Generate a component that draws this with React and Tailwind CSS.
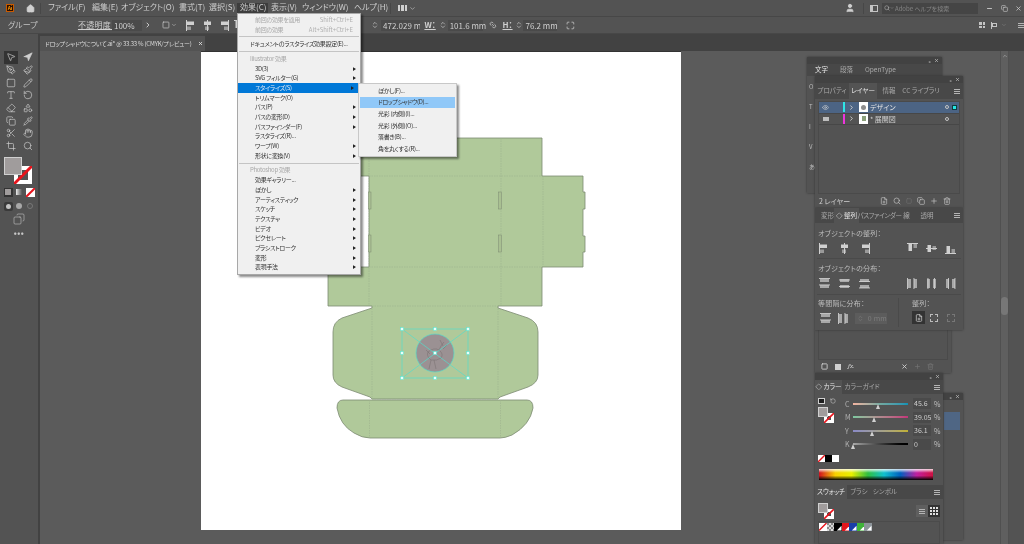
import {
  ChevronDown,
  ChevronRight,
  ChevronsUpDown,
  Copy,
  Eye,
  House,
  Link2,
  Minus,
  MousePointer2,
  Navigation,
  PenTool,
  Pencil,
  Eraser,
  Paintbrush,
  Pipette,
  RotateCcw,
  Search,
  Square,
  Trash2,
  Type,
  User,
  X,
  Plus,
  FilePlus,
  Crop,
  Shapes,
  Scissors,
  Hand,
  Maximize,
} from "lucide-react";

const menuBar = [
  ["ファイル(F)", "w-[44px]"],
  ["編集(E)", "w-[29px]"],
  ["オブジェクト(O)", "w-[58px]"],
  ["書式(T)", "w-[30px]"],
  ["選択(S)", "w-[31px]"],
  ["効果(C)", "w-[31px]"],
  ["表示(V)", "w-[31px]"],
  ["ウィンドウ(W)", "w-[52px]"],
  ["ヘルプ(H)", "w-[40px]"],
];

// 効果メニュー
const effectMenu = [
  { t: "前回の効果を適用", k: "Shift+Ctrl+E", off: true },
  { t: "前回の効果", k: "Alt+Shift+Ctrl+E", off: true },
  { sep: true },
  { t: "ドキュメントのラスタライズ効果設定(E)...", head: true },
  { sep: true },
  { t: "Illustrator 効果", head: true, off: true },
  { t: "3D(3)", sub: true },
  { t: "SVG フィルター(G)", sub: true },
  { t: "スタイライズ(S)", sub: true, on: true },
  { t: "トリムマーク(O)" },
  { t: "パス(P)", sub: true },
  { t: "パスの変形(D)", sub: true },
  { t: "パスファインダー(F)", sub: true },
  { t: "ラスタライズ(R)..." },
  { t: "ワープ(W)", sub: true },
  { t: "形状に変換(V)", sub: true },
  { sep: true },
  { t: "Photoshop 効果", head: true, off: true },
  { t: "効果ギャラリー..." },
  { t: "ぼかし", sub: true },
  { t: "アーティスティック", sub: true },
  { t: "スケッチ", sub: true },
  { t: "テクスチャ", sub: true },
  { t: "ビデオ", sub: true },
  { t: "ピクセレート", sub: true },
  { t: "ブラシストローク", sub: true },
  { t: "変形", sub: true },
  { t: "表現手法", sub: true },
];

const styleMenu = ["ぼかし(F)...", "ドロップシャドウ(D)...", "光彩 (内側)(I)...", "光彩 (外側)(O)...", "落書き(B)...", "角を丸くする(R)..."];

function Tri({ className = "" }) {
  return (
    <svg width="3" height="4" viewBox="0 0 4 5" className={className}>
      <polygon points="0,0 4,2.5 0,5" fill="currentColor" />
    </svg>
  );
}

function MenuRow({ item }) {
  if (item.sep) return <div className="h-[1px] mx-[1px] my-[2px] bg-[#c4c4c4]" />;
  const color = item.off ? "text-[#a8a8a8]" : item.on ? "text-[#dfe9f5]" : "text-[#333333]";
  return (
    <div className={`h-[9.7px] flex items-center pr-[4px] ${item.head ? "pl-[12px]" : "pl-[17px]"} ${color} ${item.on ? "bg-[#0078d7] mr-[2px]" : ""}`}>
      <span className="flex-1 whitespace-nowrap">{item.t}</span>
      {item.k && <span className="mr-[3px] text-[#b0b0b0] tracking-normal">{item.k}</span>}
      {item.sub && <Tri className="text-[#222222]" />}
    </div>
  );
}

// 整列パネルのアイコン
function AlignIcon({ v = false, mirror = 0 }) {
  const c = "#d0d0d0";
  const offs = [0, 5, 10][mirror];
  return (
    <svg width="11" height="11" viewBox="0 0 11 11" className="shrink-0">
      {v ? (
        <>
          <rect x="1.5" y={[1, 2, 3][mirror]} width="3.5" height="7" fill={c} />
          <rect x="6.5" y={[1, 3, 6][mirror]} width="3.5" height="4" fill="#9a9a9a" />
          <rect x="0" y={offs} width="11" height="1" fill={c} />
        </>
      ) : (
        <>
          <rect x={[1, 2, 3][mirror]} y="1.5" width="7" height="3.5" fill={c} />
          <rect x={[1, 3, 6][mirror]} y="6.5" width="4" height="3.5" fill="#9a9a9a" />
          <rect x={offs} y="0" width="1" height="11" fill={c} />
        </>
      )}
    </svg>
  );
}

// 分布アイコン: 線2本とバー2本
function DistIcon({ v = false, mirror = 0 }) {
  const c = "#d0d0d0";
  const line = [0, 1.5, 3][mirror];
  return (
    <svg width="11" height="11" viewBox="0 0 11 11" className="shrink-0">
      {v ? (
        <>
          <rect x="1" y="1" width="9" height="3" fill="#a8a8a8" />
          <rect x="1" y="7" width="9" height="3" fill="#a8a8a8" />
          <rect x="0" y={line} width="11" height="0.9" fill={c} />
          <rect x="0" y={line + 6.5} width="11" height="0.9" fill={c} />
        </>
      ) : (
        <>
          <rect x="1" y="1" width="3" height="9" fill="#a8a8a8" />
          <rect x="7" y="1" width="3" height="9" fill="#a8a8a8" />
          <rect x={line} y="0" width="0.9" height="11" fill={c} />
          <rect x={line + 6.5} y="0" width="0.9" height="11" fill={c} />
        </>
      )}
    </svg>
  );
}

function PanelMenu() {
  return (
    <div className="flex flex-col gap-[1px] w-[6px]">
      <div className="h-[1px] bg-[#b4b4b4]" />
      <div className="h-[1px] bg-[#b4b4b4]" />
      <div className="h-[1px] bg-[#b4b4b4]" />
    </div>
  );
}

function PanelHeader() {
  return (
    <div className="h-[7px] bg-[#424242] flex items-center justify-end gap-[3px] pr-[3px] text-[#c4c4c4] text-[5px] leading-none">
      <span>«</span>
      <X size={5} strokeWidth={3} />
    </div>
  );
}

function FillStroke({ small = false }) {
  return (
    <div className={`relative ${small ? "w-[16px] h-[16px]" : "w-[28px] h-[27px]"}`}>
      <div className={`absolute right-0 bottom-0 bg-white overflow-hidden ${small ? "w-[10px] h-[10px]" : "w-[18px] h-[18px]"}`}>
        <div className={`absolute bg-[#535353] ${small ? "inset-[3px]" : "inset-[4px]"}`} />
        <svg viewBox="0 0 10 10" className="absolute inset-0 w-full h-full">
          <line x1="0" y1="10" x2="10" y2="0" stroke="#e8141c" strokeWidth="1.6" />
        </svg>
      </div>
      <div className={`absolute left-0 top-0 bg-[#a09c9c] border border-[#d0d0d0] ${small ? "w-[10px] h-[10px]" : "w-[18px] h-[18px]"}`} />
    </div>
  );
}

function ToolBar() {
  const Tool = ({ icon: Icon, on, fill }) => (
    <div className={`relative w-[14px] h-[12.7px] flex items-center justify-center ${on ? "bg-[#333333]" : ""}`}>
      <Icon size={10} strokeWidth={1.6} className="text-[#cfcfcf]" fill={fill ? "#cfcfcf" : "none"} />
    </div>
  );
  const tools = [
    [MousePointer2, true, false],
    [Navigation, false, true],
    [PenTool],
    [Paintbrush],
    [Square],
    [Pencil],
    [Type],
    [RotateCcw],
    [Eraser],
    [Shapes],
    [Copy],
    [Pipette],
    [Scissors],
    [Hand],
    [Crop],
    [Search],
  ];
  return (
    <div className="w-[38px] shrink-0 bg-[#535353] flex flex-col items-center pt-[17px]">
      <div className="grid grid-cols-2 gap-x-[3px]">
        {tools.map(([icon, on, fill], i) => (
          <Tool key={i} icon={icon} on={on} fill={fill} />
        ))}
      </div>
      <div className="mt-[4px] -ml-[3px]">
        <FillStroke />
      </div>
      <div className="flex gap-[2px] mt-[4px]">
        <div className="w-[9px] h-[9px] bg-[#333333] p-[1.5px]"><div className="w-full h-full bg-[#a09c9c]" /></div>
        <div className="w-[9px] h-[9px] p-[1.5px]"><div className="w-full h-full bg-gradient-to-r from-[#eeeeee] to-[#555555]" /></div>
        <div className="w-[9px] h-[9px] bg-white overflow-hidden">
          <svg viewBox="0 0 9 9"><line x1="0" y1="9" x2="9" y2="0" stroke="#e8141c" strokeWidth="2" /></svg>
        </div>
      </div>
      <div className="flex gap-[2px] mt-[5px]">
        <div className="w-[9px] h-[9px] rounded-[2px] bg-[#3a3a3a] flex items-center justify-center"><div className="w-[5px] h-[5px] rounded-full bg-[#c4c4c4]" /></div>
        <div className="w-[9px] h-[9px] flex items-center justify-center"><div className="w-[6px] h-[6px] rounded-full bg-[#a8a8a8]" /></div>
        <div className="w-[9px] h-[9px] flex items-center justify-center"><div className="w-[6px] h-[6px] rounded-full border border-[#777777]" /></div>
      </div>
      <Copy size={12} className="text-[#c4c4c4] mt-[2px] -scale-x-100" strokeWidth={1.2} />
      <div className="text-[#c8c8c8] text-[8px] leading-none mt-[4px] font-bold tracking-[0.5px]">•••</div>
    </div>
  );
}

function Handle({ x, y }) {
  return <rect x={x - 1.5} y={y - 1.5} width="3" height="3" fill="#eafffb" stroke="#4fe3d2" strokeWidth="0.5" />;
}

function Dieline() {
  const fold = { stroke: "#9db28d", strokeWidth: 0.6, strokeDasharray: "1.5 1", fill: "none" };
  const cut = { fill: "#b0c99a", stroke: "#7c8a72", strokeWidth: 0.8 };
  return (
    <svg viewBox="201 52 480 478" className="w-full h-full block">
      {/* 上部 */}
      <path d="M369 138 H500 V138 H542 V176 H583 V192 H585 V209 H583 V236 H585 V252 H583 V267 H542 V306 H498 L498 308 L528 318 Q538 322 538 332 V375 Q538 383 528 387 L500 397 L498 399 H372 L370 397 L342 387 Q333 383 333 375 V332 Q333 322 342 318 L372 308 V306 H328 V267 H369 V176 H340 V138 Z" {...cut} />
      <path d="M343 400 H368 L372 400 H498 L502 400 H527 Q533 400 533 408 Q530 425 512 435 Q505 438 500 438 H370 Q362 438 354 433 Q340 425 337 408 Q337 400 343 400 Z" {...cut} />
      {/* 折り線 */}
      <path d="M369 138 V306 M501 138 V306 M369 176 H543 M369 267 H543 M372 306 V399 M498 306 V399 M372 306 H498 M369.5 400 V438 M500.5 400 V438 M372 399 H498 M543 176 V267" {...fold} />
      {/* スリット */}
      <rect x="368.5" y="192" width="2.5" height="17" fill="#a9c092" stroke="#7c8a72" strokeWidth="0.5" />
      <rect x="368.5" y="235" width="2.5" height="17" fill="#a9c092" stroke="#7c8a72" strokeWidth="0.5" />
      <rect x="498.5" y="192" width="3" height="17" fill="#a9c092" stroke="#7c8a72" strokeWidth="0.5" />
      <rect x="498.5" y="235" width="3" height="17" fill="#a9c092" stroke="#7c8a72" strokeWidth="0.5" />
      {/* ロゴと選択枠 */}
      <circle cx="435" cy="353" r="19" fill="#9b9193" stroke="#55dccb" strokeWidth="0.7" />
      <path d="M444 342 Q441 345 439 350 Q434 347 428 352 Q426 356 431 360 L429 369 M434 360 L436 369 M439 350 Q444 354 441 358 Q437 361 431 360 M447 345 L443 349 M426 350 L430 354 M440 340 L443 346" fill="none" stroke="#6d6466" strokeWidth="0.4" />
      <rect x="402" y="329" width="66" height="49" fill="none" stroke="#55dccb" strokeWidth="0.7" />
      <path d="M402 329 L468 378 M468 329 L402 378" stroke="#55dccb" strokeWidth="0.7" />
      {[[402, 329], [435, 329], [468, 329], [402, 353], [468, 353], [402, 378], [435, 378], [468, 378], [435, 353]].map(([x, y]) => (
        <Handle key={`${x}-${y}`} x={x} y={y} />
      ))}
    </svg>
  );
}

function LayerRow({ name, color, on, dot }) {
  return (
    <div className={`h-[11.5px] flex items-center border-b border-[#474747] ${on ? "bg-[#4c6484]" : ""}`}>
      <div className="w-[11px] flex justify-center ml-[1px]">
        {on ? <Eye size={7} className="text-[#d4d4d4]" /> : <div className="w-[6px] h-[4px] bg-[#bdbdbd]" />}
      </div>
      <div className={`w-[2px] h-[10px] ml-[12px] ${color}`} />
      <ChevronRight size={7} strokeWidth={3} className="text-[#d4d4d4] ml-[3px]" />
      <div className="w-[9px] h-[10px] ml-[4px] bg-white flex items-center justify-center">
        <div className={on ? "w-[5px] h-[5px] rounded-full bg-[#8d8d8d]" : "w-[4px] h-[5px] bg-[#8ba07a]"} />
      </div>
      <span className={`ml-[2px] text-[7px] ${on ? "text-[#e4e4e4]" : "text-[#cfcfcf]"}`}>{name}</span>
      <div className="ml-auto mr-[2px] flex items-center gap-[3px]">
        <div className="w-[4px] h-[4px] rounded-full border border-[#c4c4c4]" />
        <div className={`w-[5px] h-[5px] ${dot ? "bg-[#25e6e6] border border-[#103c3c]" : ""}`} />
      </div>
    </div>
  );
}

function LayersPanel() {
  return (
    <div className="absolute left-[815px] top-[76px] w-[148px] h-[132px] bg-[#535353] flex flex-col shadow-[0_0_2px_#333333] text-[#bdbdbd]">
      <PanelHeader />
      <div className="h-[16px] bg-[#484848] flex items-stretch text-[6.5px]">
        <div className="w-[34px] flex items-center justify-center text-[#aaaaaa]">プロパティ</div>
        <div className="w-[28px] bg-[#535353] flex items-center justify-center text-[#e8e8e8]">レイヤー</div>
        <div className="w-[24px] flex items-center justify-center text-[#aaaaaa]">情報</div>
        <div className="w-[40px] flex items-center justify-center text-[#aaaaaa] whitespace-nowrap">CC ライブラリ</div>
        <div className="ml-auto mr-[3px] self-center"><PanelMenu /></div>
      </div>
      <div className="mx-[3px] mt-[2px] flex-1 flex flex-col border border-[#4a4a4a]">
        <LayerRow name="デザイン" color="bg-[#2fe6e6]" on dot />
        <LayerRow name="* 展開図" color="bg-[#ee35dc]" />
      </div>
      <div className="h-[14px] flex items-center pl-[4px] pr-[12px] text-[7px] text-[#cfcfcf]">
        <span className="mr-auto">2 レイヤー</span>
        <div className="flex items-center gap-[5px] text-[#c4c4c4]">
          <FilePlus size={8} />
          <Search size={8} />
          <Square size={6} className="text-[#777777]" />
          <Copy size={8} />
          <Plus size={8} />
          <Trash2 size={8} />
        </div>
      </div>
    </div>
  );
}

function AlignPanel() {
  const columns = "flex items-center pr-[5px] mx-[2px] pl-[2px]";
  return (
    <div className="absolute left-[815px] top-[208px] w-[148px] h-[122px] bg-[#535353] flex flex-col shadow-[0_0_2px_#333333] text-[#bdbdbd] text-[7px] tracking-[0.2px]">
      <div className="h-[15px] bg-[#484848] flex items-stretch text-[6.5px] text-[#aaaaaa] shrink-0 tracking-normal">
        <div className="w-[19px] flex items-center justify-end">変形</div>
        <div className="w-[25px] bg-[#535353] text-[#e8e8e8] flex items-center justify-center whitespace-nowrap">◇ 整列</div>
        <div className="w-[41px] flex items-center justify-center whitespace-nowrap tracking-[-0.3px]">パスファインダー</div>
        <div className="w-[13px] flex items-center justify-center">線</div>
        <div className="w-[28px] flex items-center justify-center">透明</div>
        <div className="ml-auto mr-[3px] self-center"><PanelMenu /></div>
      </div>
      <div className="pl-[3px] mt-[5px] leading-[10px]">オブジェクトの整列：</div>
      <div className={`${columns} mt-[5px] border-b border-[#4a4a4a] pb-[4px]`}>
        <div className="flex gap-[9px]"><AlignIcon /><AlignIcon mirror={1} /><AlignIcon mirror={2} /></div>
        <div className="flex gap-[8px] ml-auto"><AlignIcon v /><AlignIcon v mirror={1} /><AlignIcon v mirror={2} /></div>
      </div>
      <div className="pl-[3px] mt-[4px] leading-[10px]">オブジェクトの分布：</div>
      <div className={`${columns} mt-[5px] border-b border-[#4a4a4a] pb-[5px]`}>
        <div className="flex gap-[9px]"><DistIcon v /><DistIcon v mirror={1} /><DistIcon v mirror={2} /></div>
        <div className="flex gap-[8px] ml-auto"><DistIcon /><DistIcon mirror={1} /><DistIcon mirror={2} /></div>
      </div>
      <div className="flex flex-1 mt-[3px]">
        <div className="w-[84px] border-r border-[#4a4a4a] pl-[3px] mb-[3px]">
          <div className="leading-[10px]">等間隔に分布：</div>
          <div className="flex items-center gap-[7px] mt-[5px] pl-[2px]">
            <DistIcon v />
            <DistIcon />
            <div className="w-[32px] h-[11px] bg-[#5c5c5c] flex items-center gap-[4px] pl-[2px] text-[#7e7e7e] -ml-[1px] whitespace-nowrap">
              <ChevronsUpDown size={7} /> 0 mm
            </div>
          </div>
        </div>
        <div className="pl-[13px]">
          <div className="leading-[10px]">整列：</div>
          <div className="flex items-center gap-[3px] mt-[3px]">
            <div className="w-[13px] h-[13px] bg-[#333333] flex items-center justify-center"><FilePlus size={8} className="text-[#dddddd]" /></div>
            <div className="w-[8px] h-[8px] ml-[2px] border border-dashed border-[#bdbdbd]" />
            <div className="w-[8px] h-[8px] ml-[6px] border border-dashed border-[#777777]" />
          </div>
        </div>
      </div>
    </div>
  );
}

function Slider({ label, track, pos, value }) {
  return (
    <div className="h-[13.5px] flex items-center">
      <span className="w-[8px] text-[#b0b0b0] text-[7px]">{label}</span>
      <div className="relative w-[55px] h-[2px]">
        <div className={`w-full h-full ${track}`} />
        <div className={`absolute top-[1px] w-0 h-0 border-x-[2.5px] border-x-transparent border-b-[5px] border-b-[#d0d0d0] ${pos}`} />
      </div>
      <div className="w-[18px] h-[11px] ml-[5px] bg-[#4a4a4a] text-[#cfcfcf] text-[7px] pl-[1px] leading-[11px] overflow-hidden whitespace-nowrap">{value}</div>
      <span className="ml-[3px] text-[#c0c0c0] text-[7px]">%</span>
    </div>
  );
}

function Swatch({ className, children }) {
  return (
    <div className={`relative w-[7.5px] h-[7.5px] overflow-hidden ${className}`}>
      {children}
      <div className="absolute right-0 bottom-0 w-0 h-0 border-l-[3px] border-t-[3px] border-l-transparent border-t-transparent border-r-[0px] border-b-0 shadow-none" />
    </div>
  );
}

function ColorPanel() {
  const corner = (
    <svg viewBox="0 0 8 8" className="absolute inset-0 w-full h-full"><polygon points="8,3 8,8 3,8" fill="#ffffff" /></svg>
  );
  return (
    <div className="absolute left-[815px] top-[373px] w-[128px] h-[171px] bg-[#535353] flex flex-col text-[7px] text-[#bdbdbd] shadow-[0_0_2px_#333333]">
      <PanelHeader />
      <div className="h-[14px] bg-[#484848] flex items-stretch text-[6.5px] text-[#aaaaaa] shrink-0">
        <div className="w-[27px] bg-[#535353] text-[#e8e8e8] flex items-center justify-center whitespace-nowrap">◇ カラー</div>
        <div className="w-[40px] flex items-center justify-center">カラーガイド</div>
        <div className="ml-auto mr-[3px] self-center"><PanelMenu /></div>
      </div>
      <div className="flex pl-[3px] h-[56px] pt-[3px] shrink-0">
        <div className="w-[27px] flex flex-col">
          <div className="flex items-center gap-[5px] h-[8px]">
            <div className="w-[7px] h-[6px] bg-[#1d1d1d] border border-[#d0d0d0]" />
            <RotateCcw size={6} className="text-[#d0d0d0]" />
          </div>
          <div className="mt-[2px]"><FillStroke small /></div>
        </div>
        <div>
          <Slider label="C" track="bg-gradient-to-r from-[#f2b3a0] via-[#70a8a0] to-[#0b93b5]" pos="left-[23px]" value="45.6" />
          <Slider label="M" track="bg-gradient-to-r from-[#7cc8a0] to-[#c2347a]" pos="left-[19px]" value="39.05" />
          <Slider label="Y" track="bg-gradient-to-r from-[#8a8ac6] to-[#c0b030]" pos="left-[17px]" value="36.1" />
          <Slider label="K" track="bg-gradient-to-r from-[#a8a8a8] to-[#000000]" pos="left-[-2px]" value="0" />
        </div>
      </div>
      <div className="flex pl-[3px] mt-[5px] shrink-0">
        <div className="w-[7px] h-[7px] bg-white overflow-hidden"><svg viewBox="0 0 7 7"><line x1="0" y1="7" x2="7" y2="0" stroke="#e8141c" strokeWidth="1.4" /></svg></div>
        <div className="w-[7px] h-[7px] bg-black" />
        <div className="w-[7px] h-[7px] bg-white" />
      </div>
      <div className="ml-[4px] mr-[10px] mt-[7px] h-[11px] shrink-0 bg-[linear-gradient(to_bottom,rgba(255,255,255,0.85),transparent_35%,transparent_60%,#000000),linear-gradient(to_right,#d01020,#f8d000,#e8f000,#30c040,#10c0d0,#0060c0,#c020a0,#d01040)]" />
      <div className="h-[14px] mt-[5px] bg-[#484848] flex items-stretch text-[6.5px] text-[#aaaaaa] shrink-0">
        <div className="w-[32px] bg-[#535353] text-[#e8e8e8] flex items-center justify-center">スウォッチ</div>
        <div className="w-[24px] flex items-center justify-center">ブラシ</div>
        <div className="w-[28px] flex items-center justify-center">シンボル</div>
        <div className="ml-auto mr-[3px] self-center"><PanelMenu /></div>
      </div>
      <div className="flex items-center pl-[3px] pr-[3px] mt-[4px] shrink-0">
        <FillStroke small />
        <div className="ml-auto flex">
          <div className="w-[12px] h-[12px] bg-[#5f5f5f] flex items-center justify-center"><PanelMenu /></div>
          <div className="w-[12px] h-[12px] bg-[#333333] grid grid-cols-3 gap-[1px] p-[2px]">
            {Array.from({ length: 9 }).map((_, i) => <div key={i} className="bg-[#e0e0e0]" />)}
          </div>
        </div>
      </div>
      <div className="flex mx-[3px] mt-[2px] pt-[1px] flex-1 border border-[#4b4b4b] items-start">
        <Swatch className="bg-white">
          <svg viewBox="0 0 8 8" className="absolute inset-0 w-full h-full"><line x1="0" y1="8" x2="8" y2="0" stroke="#e8141c" strokeWidth="1.5" /></svg>
        </Swatch>
        <Swatch className="bg-[repeating-conic-gradient(#d8d8d8_0_25%,#8a8a8a_0_50%)] bg-[length:4px_4px]" />
        {["bg-black", "bg-[#e0161c]", "bg-[#1a3ea8]", "bg-[#3fb43a]", "bg-[#8d959b]"].map((c) => (
          <Swatch key={c} className={c}>{corner}</Swatch>
        ))}
      </div>
    </div>
  );
}

export default function App() {
  return (
    <div className="relative w-[1024px] h-[544px] overflow-hidden flex flex-col bg-[#535353] blur-[0.3px] font-['Noto_Sans_CJK_JP','Noto_Sans',sans-serif] [font-feature-settings:'palt'] text-[#cfcfcf]">
      {/* タイトルバー */}
      <div className="h-[17px] shrink-0 flex items-center border-b border-[#474747] text-[8px]">
        <div className="w-[8px] h-[8px] ml-[6px] bg-[#2b0f00] border border-[#c85a00] text-[#ff9a00] text-[5px] leading-[6px] text-center font-bold">Ai</div>
        <House size={9} fill="#d0d0d0" className="ml-[12px] text-[#d0d0d0]" />
        <div className="w-[1px] h-[11px] bg-[#474747] ml-[5px] mr-[7px]" />
        {menuBar.map(([name, w]) => (
          <div key={name} className={`${w} self-start mt-[3px] h-[10px] leading-[8px] whitespace-nowrap ${name === "効果(C)" ? "bg-[#3d3d3d] pl-[3px] -ml-[3px] mr-[3px]" : ""}`}>{name}</div>
        ))}
        <div className="w-[1px] h-[11px] bg-[#474747] ml-[-4px] mr-[7px]" />
        <div className="w-[9px] h-[6px] grid grid-cols-3 gap-[1px]"><div className="bg-[#d0d0d0]" /><div className="bg-[#d0d0d0]" /><div className="bg-[#d0d0d0]" /></div>
        <ChevronDown size={7} className="ml-[2px]" />
        <User size={10} fill="#d0d0d0" className="ml-[429px]" />
        <div className="w-[1px] h-[11px] bg-[#474747] ml-[8px]" />
        <div className="w-[8px] h-[7px] ml-[6px] border border-[#c4c4c4] border-l-[3px]" />
        <div className="w-[96px] h-[11px] ml-[4px] bg-[#454545] flex items-center pl-[2px] text-[6px] text-[#858585] whitespace-nowrap">
          <Search size={6} className="text-[#bdbdbd]" /><ChevronDown size={4} className="text-[#bdbdbd] mr-[1px]" /> Adobe ヘルプを検索
        </div>
        <Minus size={7} className="ml-[8px]" strokeWidth={3} />
        <Copy size={7} className="ml-[8px]" />
        <X size={7} className="ml-[7px]" strokeWidth={2.5} />
      </div>

      {/* コントロールバー */}
      <div className="h-[17px] shrink-0 flex items-center border-b border-[#474747] text-[8px]">
        <span className="ml-[8px] w-[67px] text-[#c4c4c4]">グループ</span>
        <span className="ml-[4px] w-[34px] underline whitespace-nowrap tracking-[0.3px]">不透明度：</span>
        <div className="w-[30px] h-[11px] bg-[#4a4a4a] pl-[2px] leading-[11px]">100%</div>
        <ChevronRight size={8} strokeWidth={3} className="ml-[2px]" />
        <Square size={8} className="ml-[11px]" />
        <ChevronDown size={6} className="ml-[1px]" />
        <div className="flex gap-[5px] ml-[9px]"><AlignIcon /><AlignIcon mirror={1} /><AlignIcon mirror={2} /><AlignIcon v /></div>
        <ChevronsUpDown size={8} className="ml-[126px]" />
        <div className="w-[40px] h-[11px] ml-[2px] bg-[#4a4a4a] leading-[11px] pl-[2px] overflow-hidden whitespace-nowrap">472.029 m</div>
        <span className="ml-[4px] underline font-bold">W：</span>
        <ChevronsUpDown size={8} className="ml-[3px]" />
        <div className="w-[35px] h-[11px] ml-[1px] bg-[#4a4a4a] leading-[11px] pl-[2px] whitespace-nowrap">101.6 mm</div>
        <Link2 size={8} className="ml-[6px] rotate-45" />
        <span className="ml-[6px] underline font-bold">H：</span>
        <ChevronsUpDown size={8} className="ml-[2px]" />
        <div className="w-[34px] h-[11px] ml-[1px] bg-[#4a4a4a] leading-[11px] pl-[2px] whitespace-nowrap">76.2 mm</div>
        <Maximize size={9} className="ml-[9px]" />
        <div className="w-[6px] h-[6px] ml-[404px] grid grid-cols-2 gap-[1px]"><div className="bg-[#c4c4c4]" /><div className="bg-[#c4c4c4]" /><div className="bg-[#c4c4c4]" /><div className="bg-[#c4c4c4]" /></div>
        <div className="w-[7px] h-[7px] ml-[6px] border-l border-[#c4c4c4] flex items-center"><div className="w-[5px] h-[4px] border border-[#c4c4c4]" /></div>
        <ChevronDown size={6} className="ml-[3px] text-[#858585]" />
        <div className="ml-[11px]"><PanelMenu /></div>
      </div>

      {/* 作業エリア */}
      <div className="flex-1 min-h-0 flex">
        <ToolBar />
        <div className="flex-1 flex flex-col min-w-0 border-l-2 border-[#424242]">
          <div className="h-[17px] shrink-0 bg-[#424242] flex items-end">
            <div className="w-[165px] h-[15px] bg-[#535353] flex items-center pl-[5px] pr-[2px] text-[6px] tracking-[-0.2px] text-[#dcdcdc] whitespace-nowrap">
              <span className="flex-1">ドロップシャドウについて.ai* @ 33.33 % (CMYK/プレビュー)</span>
              <X size={5} strokeWidth={4} className="text-[#e0e0e0]" />
            </div>
          </div>
          <div className="flex-1 min-h-0 flex bg-[#5b5b5b]">
            <div className="flex-1 pl-[161px] pt-[1px]">
              <div className="w-[480px] h-[478px] bg-white shadow-[0_-1px_0_#333333]">
                <Dieline />
              </div>
            </div>
            <div className="w-[9px] shrink-0 bg-[#5f5f5f] border-x border-[#505050] flex flex-col items-center">
              <ChevronDown size={6} className="rotate-180 text-[#c0c0c0] mt-[2px]" />
              <div className="w-[7px] h-[18px] mt-[238px] rounded-full bg-[#777777]" />
            </div>
            <div className="w-[15px] shrink-0 bg-[#535353]" />
          </div>
        </div>
      </div>

      {/* 文字パネル(背面) */}
      <div className="absolute left-[807px] top-[57px] w-[135px] h-[136px] bg-[#535353] shadow-[0_0_2px_#333333] flex flex-col text-[7px]">
        <PanelHeader />
        <div className="h-[12px] bg-[#484848] flex items-center text-[6.5px] text-[#aaaaaa]">
          <span className="ml-[8px] text-[#e8e8e8]">文字</span>
          <span className="ml-[12px]">段落</span>
          <span className="ml-[12px]">OpenType</span>
        </div>
        <div className="flex flex-col gap-[11px] pl-[2px] pt-[6px] text-[#bdbdbd] text-[6px]">
          <span>O</span><span>T</span><span>I</span><span>V</span><span>あ</span>
        </div>
      </div>

      {/* 背面パネル */}
      <div className="absolute left-[930px] top-[393px] w-[33px] h-[147px] bg-[#535353] shadow-[0_0_2px_#333333] flex flex-col">
        <div className="h-[7px] bg-[#424242] flex items-center justify-end gap-[3px] pr-[3px] text-[5px] text-[#c4c4c4]"><span>«</span><X size={5} strokeWidth={3} /></div>
        <div className="ml-auto w-[16px] h-[18px] mr-[3px] mt-[12px] bg-[#4f6684]" />
      </div>

      {/* 透明パネル(背面) */}
      <div className="absolute left-[815px] top-[330px] w-[136px] h-[43px] bg-[#535353] shadow-[0_0_2px_#333333] flex flex-col px-[3px]">
        <div className="h-[30px] border border-t-0 border-[#4a4a4a]" />
        <div className="flex items-center h-[13px] pl-[3px] text-[#d0d0d0]">
          <Square size={7} strokeWidth={3} />
          <div className="w-[6px] h-[6px] bg-[#d0d0d0] ml-[7px]" />
          <span className="ml-[7px] text-[7px] italic font-serif">fx.</span>
          <X size={7} className="ml-[47px]" strokeWidth={3} />
          <Plus size={7} className="ml-[6px] text-[#777777]" />
          <Trash2 size={7} className="ml-[6px] text-[#777777]" />
        </div>
      </div>

      <LayersPanel />
      <AlignPanel />
      <ColorPanel />

      {/* 効果メニュー */}
      <div className="absolute left-[237px] top-[13px] w-[124px] h-[262px] pt-[1px] bg-[#f0f0f0] border border-[#a8a8a8] shadow-[2px_2px_2px_rgba(0,0,0,0.45)] text-[6px] tracking-[-0.3px] leading-none">
        {effectMenu.map((item, i) => <MenuRow key={i} item={item} />)}
      </div>
      <div className="absolute left-[358px] top-[83px] w-[99px] h-[74px] pt-[1px] bg-[#f0f0f0] border border-[#c8c8c8] shadow-[2px_2px_2px_rgba(0,0,0,0.45)] text-[6px] tracking-[-0.3px] leading-none text-[#333333]">
        {styleMenu.map((t, i) => (
          <div key={t} className={`h-[11.6px] flex items-center pl-[18px] mx-[1px] ${i === 1 ? "bg-[#90c8f8]" : ""}`}>{t}</div>
        ))}
      </div>
    </div>
  );
}
